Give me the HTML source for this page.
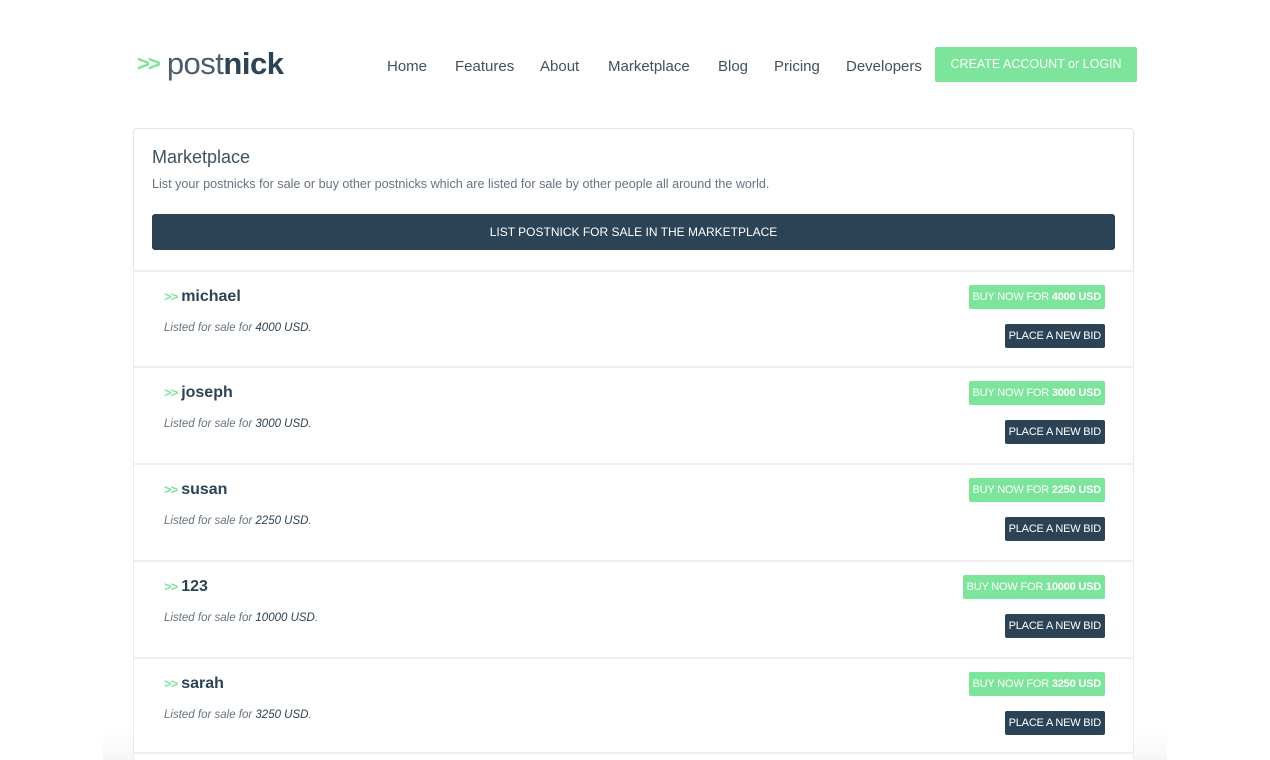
<!DOCTYPE html>
<html><head><style>
*{margin:0;padding:0;box-sizing:border-box}
html,body{width:1270px;height:760px;overflow:hidden}
body{background:#fff;font-family:"Liberation Sans",sans-serif;color:#2c4356;position:relative}
.abs{position:absolute}
.nav a{position:absolute;top:58px;font-size:15px;color:#3e5262;text-decoration:none}
.cta{left:935px;top:47px;width:202px;height:35px;background:#7ce49b;color:#fff;font-size:12.5px;text-align:center;line-height:35px;border-radius:2px}
.card{left:133px;top:128px;width:1001px;height:144px;border:1.5px solid #e4e4e4;border-radius:4px;border-bottom:none}
.bar{left:152px;top:214px;width:963px;height:36px;background:#2c4356;border-radius:3px;color:#fff;font-size:12px;text-align:center;line-height:36px}
.row{position:absolute;left:133px;width:1001px;height:97px;border:1.5px solid #eaeaea;border-top:2px solid #efefef;border-bottom:none;background:#fff}
.nm{position:absolute;left:30px;top:16px;font-size:16px;font-weight:bold;color:#2c4356}
.nm span{color:#7ce49b;font-size:13px;margin-right:4px;letter-spacing:-1px}
.ls{position:absolute;left:30px;top:50px;font-size:11.5px;font-style:italic;color:#66737f}
.ls b{font-weight:normal;color:#2c4356}
.buy{position:absolute;right:28px;top:13px;height:24px;line-height:24px;padding:0 4px;background:#7ce49b;color:#fff;font-size:11px;border-radius:2px;letter-spacing:-0.2px}
.bid{position:absolute;right:28px;top:52px;height:24px;line-height:24px;padding:0 4px;background:#2c4356;color:#fff;font-size:11px;border-radius:2px;letter-spacing:-0.2px}
</style></head><body>
<div class="abs" style="left:103px;top:730px;width:1064px;height:30px;background:linear-gradient(#fff,#f6f6f6)"></div>
<div class="abs" style="left:137px;top:46px;font-size:31px;color:#4a5e6d;letter-spacing:-0.5px"><span style="color:#7ce49b;font-weight:bold;font-size:22px;letter-spacing:-2px;position:relative;top:-3px">&gt;&gt;</span> post<b style="color:#2c4356">nick</b></div>
<div class="nav">
<a style="left:387px">Home</a><a style="left:455px">Features</a><a style="left:540px">About</a><a style="left:608px">Marketplace</a><a style="left:718px">Blog</a><a style="left:774px">Pricing</a><a style="left:846px">Developers</a>
</div>
<div class="abs cta">CREATE ACCOUNT or LOGIN</div>
<div class="abs card"></div>
<div class="abs" style="left:152px;top:147px;font-size:18px;color:#3e5262">Marketplace</div>
<div class="abs" style="left:152px;top:177px;font-size:12.6px;color:#66737f">List your postnicks for sale or buy other postnicks which are listed for sale by other people all around the world.</div>
<div class="abs bar">LIST POSTNICK FOR SALE IN THE MARKETPLACE</div>

<div class="row" style="top:270px"><div class="nm"><span>&gt;&gt;</span>michael</div><div class="ls">Listed for sale for <b>4000 USD</b>.</div><div class="buy">BUY NOW FOR <b>4000 USD</b></div><div class="bid">PLACE A NEW BID</div></div>
<div class="row" style="top:366px"><div class="nm"><span>&gt;&gt;</span>joseph</div><div class="ls">Listed for sale for <b>3000 USD</b>.</div><div class="buy">BUY NOW FOR <b>3000 USD</b></div><div class="bid">PLACE A NEW BID</div></div>
<div class="row" style="top:463px"><div class="nm"><span>&gt;&gt;</span>susan</div><div class="ls">Listed for sale for <b>2250 USD</b>.</div><div class="buy">BUY NOW FOR <b>2250 USD</b></div><div class="bid">PLACE A NEW BID</div></div>
<div class="row" style="top:560px"><div class="nm"><span>&gt;&gt;</span>123</div><div class="ls">Listed for sale for <b>10000 USD</b>.</div><div class="buy">BUY NOW FOR <b>10000 USD</b></div><div class="bid">PLACE A NEW BID</div></div>
<div class="row" style="top:657px"><div class="nm"><span>&gt;&gt;</span>sarah</div><div class="ls">Listed for sale for <b>3250 USD</b>.</div><div class="buy">BUY NOW FOR <b>3250 USD</b></div><div class="bid">PLACE A NEW BID</div></div>
<div class="row" style="top:752px;height:8px"></div>
</body></html>
